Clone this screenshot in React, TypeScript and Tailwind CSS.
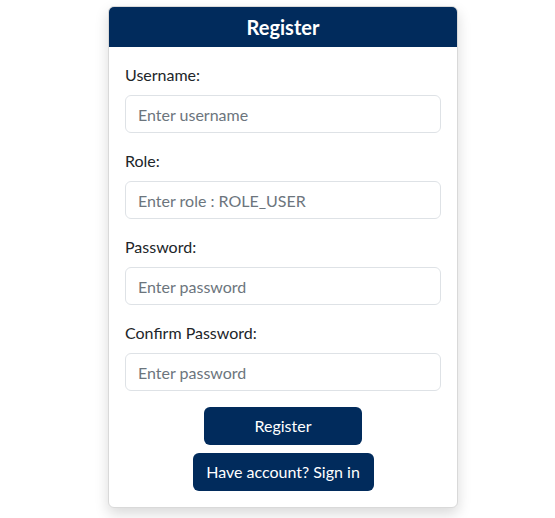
import { useState } from 'react'

const FONT = "font-['Segoe_UI','Lato','Noto_Sans',sans-serif]"

interface IFieldProps {
  label: string
  placeholder: string
  type?: string
  value: string
  onChange: (v: string) => void
}

const Field = ({ label, placeholder, type = 'text', value, onChange }: IFieldProps) => (
  <div className="mb-4">
    <label className="mb-2 block text-base leading-6 text-[#212529]">{label}</label>
    <input
      type={type}
      value={value}
      placeholder={placeholder}
      onChange={(e) => onChange(e.target.value)}
      className="block h-[38px] w-full rounded-md border border-[#dee2e6] bg-white px-3 text-base text-[#212529] outline-none placeholder:text-[#6c757d]"
    />
  </div>
)

export default function App() {
  const [username, setUsername] = useState('')
  const [role, setRole] = useState('')
  const [password, setPassword] = useState('')
  const [confirm, setConfirm] = useState('')

  return (
    <div className={`min-h-[518px] w-full bg-white pt-[6px] ${FONT}`}>
      <div className="ml-[108px] w-[350px] overflow-hidden rounded-md border border-[#d9d9d9] bg-white shadow-[0_6px_14px_rgba(0,0,0,0.15)]">
        <div className="flex h-10 items-center justify-center bg-[#012b5c]">
          <h1 className="text-xl font-bold text-white">Register</h1>
        </div>

        <form className="p-4" onSubmit={(e) => e.preventDefault()}>
          <Field label="Username:" placeholder="Enter username" value={username} onChange={setUsername} />
          <Field label="Role:" placeholder="Enter role : ROLE_USER" value={role} onChange={setRole} />
          <Field
            label="Password:"
            placeholder="Enter password"
            type="password"
            value={password}
            onChange={setPassword}
          />
          <Field
            label="Confirm Password:"
            placeholder="Enter password"
            type="password"
            value={confirm}
            onChange={setConfirm}
          />

          <div className="flex flex-col items-center gap-2">
            <button
              type="submit"
              className="h-[38px] w-[158px] rounded-md bg-[#012b5c] text-base text-white">
              Register
            </button>
            <button type="button" className="h-[38px] w-[181px] rounded-md bg-[#012b5c] text-base text-white">
              Have account? Sign in
            </button>
          </div>
        </form>
      </div>
    </div>
  )
}
